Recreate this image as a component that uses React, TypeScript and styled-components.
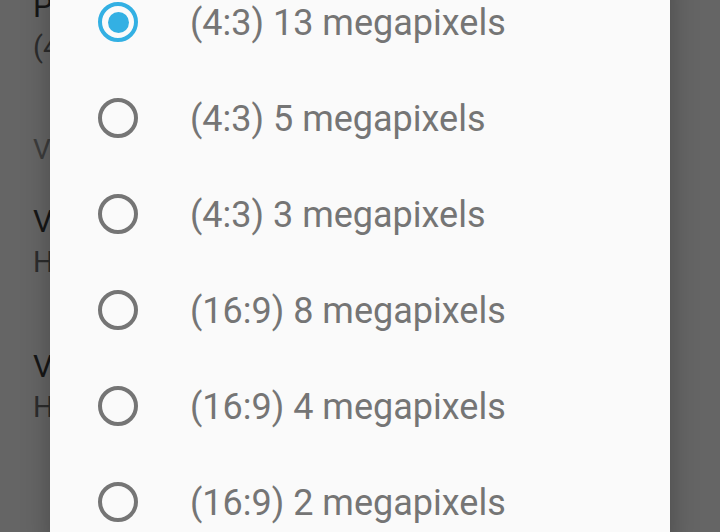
import React from 'react';
import styled, { createGlobalStyle } from 'styled-components';

const GlobalStyle = createGlobalStyle`
  html, body {
    margin: 0;
    padding: 0;
    background: #656565;
    font-family: Roboto, "Noto Sans", "Liberation Sans", sans-serif;
  }
`;

const Screen = styled.div`
  position: relative;
  width: 720px;
  height: 532px;
  overflow: hidden;
  background: #656565;
`;

const SettingsList = styled.div`
  display: flex;
  flex-direction: column;
  margin-top: -44.6px;
  padding-left: 33px;
`;

const Setting = styled.div`
  display: flex;
  flex-direction: column;
  padding: 32px 0 33px;
`;

const SettingTitle = styled.div`
  font-size: 31px;
  line-height: 40px;
  color: #161616;
  white-space: nowrap;
`;

const SettingSummary = styled.div`
  font-size: 29px;
  line-height: 40px;
  color: #2c2c2c;
  white-space: nowrap;
`;

const Category = styled.div`
  font-size: 28px;
  line-height: 40px;
  padding-top: 30px;
  color: #3c3c3c;
  white-space: nowrap;
`;

const Dialog = styled.div`
  position: absolute;
  top: -26px;
  left: 50px;
  width: 620px;
  background: #fafafa;
  box-shadow: 0 0 26px rgba(0, 0, 0, 0.28);
  display: flex;
  flex-direction: column;
`;

const Option = styled.div`
  display: flex;
  align-items: center;
  height: 96px;
  padding-left: 48px;
`;

const Radio = styled.div<{ $checked: boolean }>`
  box-sizing: border-box;
  width: 40px;
  height: 40px;
  border-radius: 50%;
  border: 4px solid ${p => (p.$checked ? '#33b0e3' : '#757575')};
  display: flex;
  align-items: center;
  justify-content: center;
  flex-shrink: 0;
`;

const Dot = styled.div`
  width: 21px;
  height: 21px;
  border-radius: 50%;
  background: #33b0e3;
`;

const Label = styled.span`
  margin-left: 52px;
  padding-top: 2px;
  font-size: 36px;
  color: #757575;
  white-space: nowrap;
`;

const options = [
  '(4:3) 13 megapixels',
  '(4:3) 5 megapixels',
  '(4:3) 3 megapixels',
  '(16:9) 8 megapixels',
  '(16:9) 4 megapixels',
  '(16:9) 2 megapixels',
];

const App: React.FC = () => {
  const selected = 0;

  return (
    <>
      <GlobalStyle />
      <Screen>
        <SettingsList>
          <Setting>
            <SettingTitle>Picture size</SettingTitle>
            <SettingSummary>(4:3) 13 megapixels</SettingSummary>
          </Setting>
          <Category>VIDEO</Category>
          <Setting>
            <SettingTitle>Video quality</SettingTitle>
            <SettingSummary>HD 1080p</SettingSummary>
          </Setting>
          <Setting>
            <SettingTitle>Video quality (front)</SettingTitle>
            <SettingSummary>HD 720p</SettingSummary>
          </Setting>
        </SettingsList>
        <Dialog>
          {options.map((o, i) => (
            <Option key={o}>
              <Radio $checked={i === selected}>{i === selected && <Dot />}</Radio>
              <Label>{o}</Label>
            </Option>
          ))}
        </Dialog>
      </Screen>
    </>
  );
};

export default App;
